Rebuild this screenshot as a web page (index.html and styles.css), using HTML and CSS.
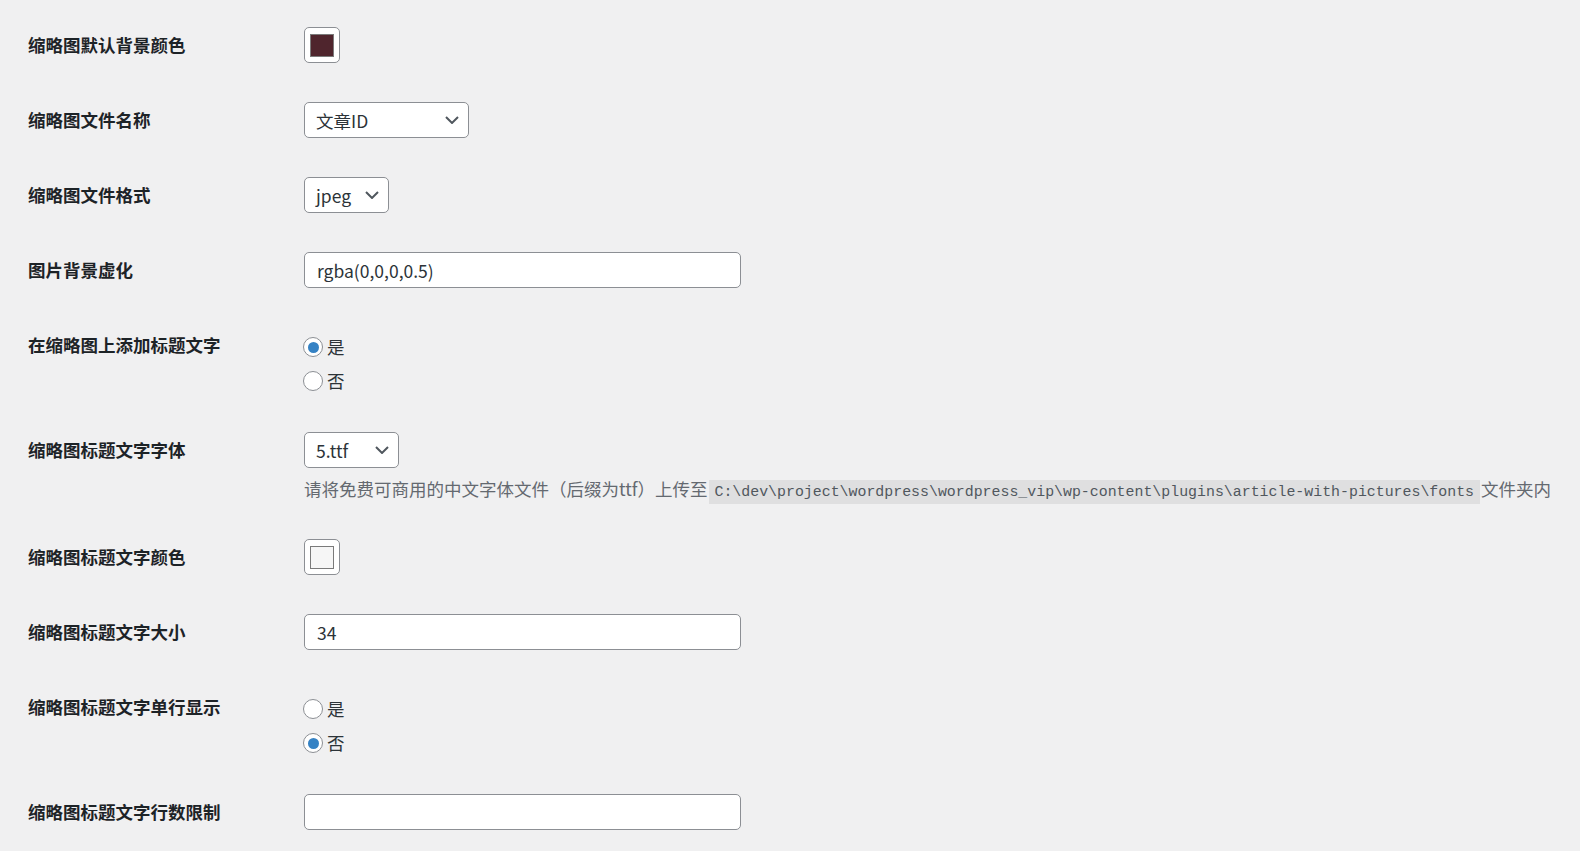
FILE: index.html
```html
<!DOCTYPE html>
<html lang="zh-CN">
<head>
<meta charset="utf-8">
<title>设置</title>
<link rel="stylesheet" href="styles.css">
</head>
<body>
<div class="page">
  <div class="row">
    <div class="th">缩略图默认背景颜色</div>
    <div class="td"><div class="color-btn"><span class="swatch swatch-dark"></span></div></div>
  </div>
  <div class="row">
    <div class="th">缩略图文件名称</div>
    <div class="td">
      <div class="select select-name"><span>文章ID</span><svg class="chev" width="14" height="8" viewBox="0 0 14 8"><path d="M1 1l6 6 6-6" fill="none" stroke="#50575e" stroke-width="2"/></svg></div>
    </div>
  </div>
  <div class="row">
    <div class="th">缩略图文件格式</div>
    <div class="td">
      <div class="select select-fmt"><span>jpeg</span><svg class="chev" width="14" height="8" viewBox="0 0 14 8"><path d="M1 1l6 6 6-6" fill="none" stroke="#50575e" stroke-width="2"/></svg></div>
    </div>
  </div>
  <div class="row">
    <div class="th">图片背景虚化</div>
    <div class="td"><div class="text-input">rgba(0,0,0,0.5)</div></div>
  </div>
  <div class="row">
    <div class="th">在缩略图上添加标题文字</div>
    <div class="td">
      <div class="fieldset">
        <label class="radio-line"><span class="radio checked"></span><span>是</span></label>
        <label class="radio-line"><span class="radio"></span><span>否</span></label>
      </div>
    </div>
  </div>
  <div class="row">
    <div class="th">缩略图标题文字字体</div>
    <div class="td td-desc">
      <div class="select select-font"><span>5.ttf</span><svg class="chev" width="14" height="8" viewBox="0 0 14 8"><path d="M1 1l6 6 6-6" fill="none" stroke="#50575e" stroke-width="2"/></svg></div>
      <p class="description">请将免费可商用的中文字体文件（后缀为ttf）上传至<code>C:\dev\project\wordpress\wordpress_vip\wp-content\plugins\article-with-pictures\fonts</code>文件夹内</p>
    </div>
  </div>
  <div class="row">
    <div class="th">缩略图标题文字颜色</div>
    <div class="td"><div class="color-btn"><span class="swatch swatch-light"></span></div></div>
  </div>
  <div class="row">
    <div class="th">缩略图标题文字大小</div>
    <div class="td"><div class="text-input">34</div></div>
  </div>
  <div class="row">
    <div class="th">缩略图标题文字单行显示</div>
    <div class="td">
      <div class="fieldset">
        <label class="radio-line"><span class="radio"></span><span>是</span></label>
        <label class="radio-line"><span class="radio checked"></span><span>否</span></label>
      </div>
    </div>
  </div>
  <div class="row">
    <div class="th">缩略图标题文字行数限制</div>
    <div class="td"><div class="text-input"></div></div>
  </div>
</div>
</body>
</html>
```
FILE: styles.css
```css
html, body {
  margin: 0;
  padding: 0;
  background: #f0f0f1;
}
body {
  font-family: "Noto Sans CJK SC", "Noto Sans", sans-serif;
  font-size: 17.5px;
  color: #2c3338;
  overflow: hidden;
}
.page {
  padding: 9px 0 0 28px;
}
.row {
  display: grid;
  grid-template-columns: 264px 1fr;
}
.th {
  padding-top: 25px;
  font-weight: 700;
  font-size: 17.5px;
  line-height: 22px;
  color: #1d2327;
}
.td {
  padding: 18px 0 21px 12px;
}
.td-desc {
  padding-bottom: 20px;
}
.color-btn {
  box-sizing: border-box;
  width: 36px;
  height: 36px;
  border: 1px solid #8c8f94;
  border-radius: 5px;
  background: #fff;
  display: flex;
  align-items: center;
  justify-content: center;
}
.swatch {
  box-sizing: border-box;
  width: 24px;
  height: 23px;
  border: 1px solid #7a7a7a;
}
.swatch-dark {
  background: #4f252d;
}
.swatch-light {
  background: #f6f6f6;
}
.select {
  box-sizing: border-box;
  height: 36px;
  border: 1px solid #8c8f94;
  border-radius: 5px;
  background: #fff;
  display: flex;
  align-items: center;
  justify-content: space-between;
  padding: 0 9px 0 11px;
  font-size: 17.5px;
  color: #2c3338;
}
.select span {
  line-height: 22px;
  padding-top: 1px;
}
.chev {
  flex: none;
  display: block;
}
.select-name { width: 165px; }
.select-fmt { width: 85px; }
.select-font { width: 95px; }
.text-input {
  box-sizing: border-box;
  width: 437px;
  height: 36px;
  border: 1px solid #8c8f94;
  border-radius: 5px;
  background: #fff;
  padding: 1px 12px 0;
  display: flex;
  align-items: center;
  font-size: 17.5px;
  color: #2c3338;
}
.fieldset {
  display: flex;
  flex-direction: column;
  margin: 3px 0 -5px;
}
.radio-line {
  height: 34px;
  display: flex;
  align-items: center;
  gap: 4px;
  margin-left: -1px;
  font-size: 17.5px;
  line-height: 22px;
  color: #2c3338;
}
.radio {
  box-sizing: border-box;
  width: 20px;
  height: 20px;
  border: 1px solid #8c8f94;
  border-radius: 50%;
  background: #fff;
  display: flex;
  align-items: center;
  justify-content: center;
}
.radio.checked::after {
  content: "";
  width: 11px;
  height: 11px;
  border-radius: 50%;
  background: #3582c4;
}
.description {
  margin: 8px 0 0;
  line-height: 25px;
  height: 25px;
  font-size: 17.5px;
  color: #646970;
  white-space: nowrap;
}
.description code {
  font-family: "Liberation Mono", "DejaVu Sans Mono", monospace;
  font-size: 14.9px;
  color: #50575e;
  background: rgba(0, 0, 0, 0.07);
  padding: 4px 6px;
  margin: 0 1px;
}
```
